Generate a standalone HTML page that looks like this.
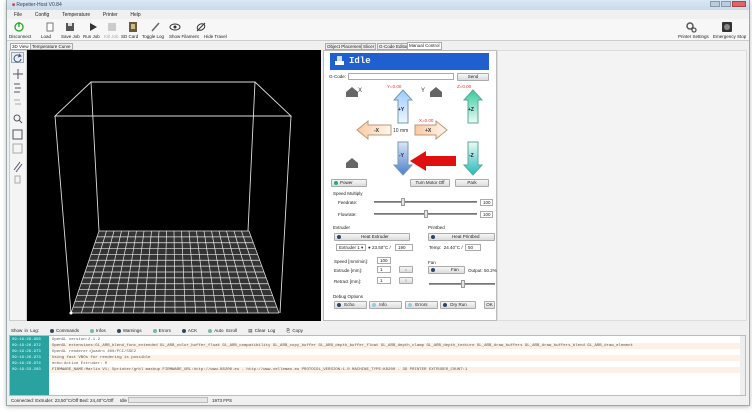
<!DOCTYPE html>
<html><head><meta charset="utf-8"><style>
*{margin:0;padding:0;box-sizing:border-box}
body{width:752px;height:413px;background:#fff;position:relative;overflow:hidden;font-family:"Liberation Sans",sans-serif;font-size:5px;color:#222}
.a{position:absolute}
.btn{position:absolute;background:linear-gradient(#f6f6f6,#dcdcdc);border:1px solid #aaa;border-radius:1px;font-size:4.5px;text-align:center;line-height:7px}
.lbl{position:absolute;font-size:4.5px;white-space:nowrap}
.tb{position:absolute;top:34px;font-size:4.5px;white-space:nowrap}
.inp{position:absolute;background:#fff;border:1px solid #aaa;font-size:4.5px;line-height:6px;padding-left:2px}
.sl{position:absolute;height:2px;background:#999;border-top:1px solid #777}
.knob{position:absolute;width:4px;height:8px;background:#e6e6e6;border:1px solid #999}
.led{display:inline-block;width:4px;height:4px;border-radius:50%;background:#346;margin:0 2px;vertical-align:middle}
.log div{height:6px;line-height:6px;font-family:"Liberation Mono",monospace;font-size:4px;white-space:nowrap;padding-left:2px}
</style></head><body>
<!-- window frame -->
<div class="a" style="left:6px;top:0;width:744px;height:406px;background:#f0f0f0;border:1px solid #9aa;box-shadow:0 1px 4px #bbb"></div>
<div class="a" style="left:7px;top:0;width:742px;height:10px;background:linear-gradient(#dbe7f3,#c9daea)"></div>
<div class="lbl" style="left:12px;top:2px;color:#345;font-size:5px"><span style="color:#c33">■</span> Repetier-Host V0.84</div>
<div class="a" style="left:710px;top:1px;width:10px;height:6px;background:#bcd;border:1px solid #89a"></div>
<div class="a" style="left:721px;top:1px;width:10px;height:6px;background:#bcd;border:1px solid #89a"></div>
<div class="a" style="left:732px;top:1px;width:14px;height:6px;background:#d66;border:1px solid #a44"></div>
<!-- menu -->
<div class="lbl" style="left:14px;top:12px;font-size:5px;word-spacing:5px">File &nbsp;Config &nbsp;Temperature &nbsp;Printer &nbsp;Help</div>
<!-- toolbar -->
<div class="a" style="left:7px;top:19px;width:742px;height:22px;background:#f7f7f7;border-bottom:1px solid #ccc"></div>
<svg class="a" style="left:14px;top:22px" width="220" height="11">
<circle cx="5" cy="5" r="4" fill="none" stroke="#2a2" stroke-width="1.3"/><line x1="5" y1="0" x2="5" y2="5" stroke="#2a2" stroke-width="1.3"/>
<rect x="33" y="1" width="6" height="8" fill="#fff" stroke="#777"/>
<rect x="52" y="1" width="8" height="8" fill="#555"/><rect x="54" y="1" width="4" height="3" fill="#ddd"/>
<path d="M76 1 L83 5 L76 9Z" fill="#333"/>
<rect x="94" y="1" width="8" height="8" fill="#ccc"/>
<rect x="115" y="0" width="8" height="10" fill="#6a5a3a"/><rect x="117" y="2" width="4" height="5" fill="#cb8"/>
<line x1="138" y1="9" x2="145" y2="1" stroke="#666" stroke-width="1.5"/>
<ellipse cx="161" cy="5" rx="5" ry="3" fill="none" stroke="#333"/><circle cx="161" cy="5" r="1.5" fill="#333"/>
<ellipse cx="187" cy="5" rx="4" ry="3" fill="none" stroke="#333" transform="rotate(-30 187 5)"/><line x1="183" y1="9" x2="191" y2="1" stroke="#333"/>
</svg>
<div class="tb" style="left:9px">Disconnect</div><div class="tb" style="left:41px">Load</div><div class="tb" style="left:61px">Save Job</div><div class="tb" style="left:83px">Run Job</div><div class="tb" style="left:104px;color:#aaa">Kill Job</div><div class="tb" style="left:121px">SD Card</div><div class="tb" style="left:142px">Toggle Log</div><div class="tb" style="left:169px">Show Filament</div><div class="tb" style="left:204px">Hide Travel</div>
<svg class="a" style="left:684px;top:22px" width="60" height="11"><circle cx="6" cy="4" r="3" fill="none" stroke="#555" stroke-width="1.5"/><circle cx="10" cy="8" r="2" fill="none" stroke="#555" stroke-width="1.3"/><rect x="38" y="0" width="10" height="10" rx="1" fill="#333"/><circle cx="43" cy="5" r="3" fill="#888"/></svg>
<div class="tb" style="left:678px">Printer Settings</div><div class="tb" style="left:713px">Emergency Stop</div>
<!-- left tabs -->
<div class="lbl" style="left:10px;top:43px;background:#fff;border:1px solid #aaa;padding:0 1px;height:7px">3D View</div>
<div class="lbl" style="left:30px;top:43px;border:1px solid #aaa;padding:0 1px;height:7px;background:#eee">Temperature Curve</div>
<!-- left tool strip -->
<div class="a" style="left:9px;top:50px;width:18px;height:271px;background:#f4f4f4;border:1px solid #ccc"></div>
<div class="a" style="left:11px;top:52px;width:13px;height:11px;border:1px solid #9ab;background:#e4eef8"></div>
<svg class="a" style="left:11px;top:52px" width="14" height="140" fill="none" stroke="#556" stroke-width="1">
<path d="M9 4 A3.5 3.5 0 1 0 10 7"/><path d="M8 2 L10 4 L7 5"/>
<path d="M7 17 V27 M2 22 H12"/>
<path d="M3 32 H9 M4 36 H10 M3 40 H9"/>
<path d="M3 48 H9 M4 52 H10" stroke="#aaa"/>
<circle cx="6" cy="66" r="3"/><path d="M8 68 L11 71"/>
<rect x="2" y="78" width="9" height="9"/>
<rect x="2" y="92" width="9" height="9" stroke="#aaa"/>
<path d="M3 118 L9 110 M5 120 L11 112"/>
<rect x="4" y="124" width="5" height="7" stroke="#aaa"/>
</svg>
<!-- 3D view -->
<svg class="a" style="left:27px;top:50px" width="294" height="271" viewBox="27 50 294 271">
<rect x="27" y="50" width="294" height="271" fill="#000"/>
<g stroke="#ddd" stroke-width="0.9" fill="none">
<path d="M91 82 H255 L291 116 H55 Z"/>
<path d="M55 116 L71 313 M291 116 L280 313 M91 82 L99 231 M255 82 L248 231"/>
</g>
<polygon points="99,231 249,231 279,313 71,313" fill="#333"/>
<g stroke="#e8e8e8" stroke-width="0.7" id="g"></g>
<circle cx="71" cy="313" r="1.5" fill="#fff"/>
</svg>
<!-- right tabs -->
<div class="lbl" style="left:325px;top:43px;border:1px solid #aaa;padding:0 1px;height:7px;background:#eee">Object Placement</div>
<div class="lbl" style="left:361px;top:43px;border:1px solid #aaa;padding:0 1px;height:7px;background:#eee">Slicer</div>
<div class="lbl" style="left:377px;top:43px;border:1px solid #aaa;padding:0 1px;height:7px;background:#eee">G-Code Editor</div>
<div class="lbl" style="left:407px;top:42px;border:1px solid #aaa;padding:0 1px;height:8px;background:#fff">Manual Control</div>
<div class="a" style="left:323px;top:50px;width:174px;height:271px;background:#fff;border:1px solid #bbb"></div>
<div class="a" style="left:497px;top:50px;width:250px;height:271px;background:#f3f3f3;border:1px solid #ddd"></div>
<!-- idle header -->
<div class="a" style="left:330px;top:53px;width:159px;height:17px;background:#1f5fd0"></div>
<svg class="a" style="left:334px;top:55px" width="12" height="12"><rect x="1" y="6" width="9" height="4" fill="#fff"/><rect x="3" y="1" width="5" height="5" fill="#cde"/></svg>
<div class="lbl" style="left:349px;top:56px;color:#fff;font:bold 9px 'Liberation Mono',monospace">Idle</div>
<div class="lbl" style="left:329px;top:74px">G-Code:</div>
<div class="inp" style="left:348px;top:73px;width:106px;height:7px"></div>
<div class="btn" style="left:457px;top:73px;width:32px;height:8px;line-height:6px">Send</div>
<!-- jog -->
<svg class="a" style="left:330px;top:83px" width="165" height="100">
<g fill="#666"><path d="M16 9 L22 4 L28 9 V14 H16Z"/><path d="M100 9 L106 4 L112 9 V14 H100Z"/><path d="M16 80 L22 75 L28 80 V85 H16Z"/></g>
<text x="28" y="9" font-size="6" fill="#333" font-family="Liberation Sans">X</text><text x="91" y="9" font-size="6" fill="#333" font-family="Liberation Sans">Y</text>
<text x="57" y="5" font-size="4.5" fill="#e33" font-family="Liberation Sans">Y=0.00</text>
<text x="127" y="5" font-size="4.5" fill="#e33" font-family="Liberation Sans">Z=0.00</text>
<text x="89" y="39" font-size="4.5" fill="#e33" font-family="Liberation Sans">X=0.00</text>
<defs><linearGradient id="b" x1="0" x2="0" y1="0" y2="1"><stop offset="0" stop-color="#8ec"/><stop offset="0" stop-color="#9cf"/><stop offset="1" stop-color="#eef6ff"/></linearGradient>
<linearGradient id="t" x1="0" x2="0" y1="0" y2="1"><stop offset="0" stop-color="#3c9"/><stop offset="1" stop-color="#eefaf5"/></linearGradient>
<linearGradient id="o" x1="0" x2="1"><stop offset="0" stop-color="#f9c9a0"/><stop offset="1" stop-color="#fff6ee"/></linearGradient>
<linearGradient id="bd" x1="0" x2="0" y1="0" y2="1"><stop offset="0" stop-color="#dde6f6"/><stop offset="1" stop-color="#4a7fd0"/></linearGradient>
<linearGradient id="td" x1="0" x2="0" y1="0" y2="1"><stop offset="0" stop-color="#eefaf5"/><stop offset="1" stop-color="#2bb"/></linearGradient></defs>
<path d="M64 17 L73 7 L82 17 H78 V40 H68 V17Z" fill="url(#b)" stroke="#79a"/><text x="68" y="28" font-size="5" font-weight="bold" fill="#224" font-family="Liberation Sans">+Y</text>
<path d="M134 17 L143 7 L152 17 H148 V40 H138 V17Z" fill="url(#t)" stroke="#5a9"/><text x="138" y="28" font-size="5" font-weight="bold" fill="#224" font-family="Liberation Sans">+Z</text>
<path d="M27 47 L38 38 V42 H61 V52 H38 V56Z" fill="url(#o)" stroke="#b97"/><text x="44" y="49" font-size="5" font-weight="bold" fill="#333" font-family="Liberation Sans">-X</text>
<path d="M117 47 L106 38 V42 H85 V52 H106 V56Z" fill="url(#o)" stroke="#b97"/><text x="95" y="49" font-size="5" font-weight="bold" fill="#333" font-family="Liberation Sans">+X</text>
<text x="63" y="49" font-size="5" fill="#333" font-family="Liberation Sans">10 mm</text>
<path d="M68 59 H78 V82 H82 L73 92 L64 82 H68Z" fill="url(#bd)" stroke="#79a"/><text x="69" y="74" font-size="5" font-weight="bold" fill="#224" font-family="Liberation Sans">-Y</text>
<path d="M138 59 H148 V82 H152 L143 92 L134 82 H138Z" fill="url(#td)" stroke="#5a9"/><text x="139" y="74" font-size="5" font-weight="bold" fill="#224" font-family="Liberation Sans">-Z</text>
<path d="M80 78 L96 68 V73 H126 V83 H96 V88Z" fill="#e01010"/>
</svg>
<div class="btn" style="left:331px;top:179px;width:36px;height:8px;line-height:6px;text-align:left"><span class="led" style="background:#2a8"></span>Power</div>
<div class="btn" style="left:410px;top:179px;width:40px;height:8px;line-height:6px">Turn Motor Off</div>
<div class="btn" style="left:455px;top:179px;width:34px;height:8px;line-height:6px">Park</div>
<!-- speed -->
<div class="lbl" style="left:333px;top:191px">Speed Multiply</div>
<div class="lbl" style="left:338px;top:200px">Feedrate:</div>
<div class="sl" style="left:374px;top:201px;width:103px"></div><div class="knob" style="left:401px;top:198px"></div>
<div class="inp" style="left:480px;top:199px;width:13px;height:7px">100</div>
<div class="lbl" style="left:338px;top:212px">Flowrate:</div>
<div class="sl" style="left:374px;top:213px;width:103px"></div><div class="knob" style="left:424px;top:210px"></div>
<div class="inp" style="left:480px;top:211px;width:13px;height:7px">100</div>
<!-- extruder -->
<div class="lbl" style="left:333px;top:225px">Extruder</div>
<div class="btn" style="left:334px;top:233px;width:76px;height:8px;line-height:6px;text-align:left"><span class="led"></span><span style="margin-left:18px">Heat Extruder</span></div>
<div class="inp" style="left:336px;top:244px;width:30px;height:7px">Extruder 1 ▾</div>
<div class="lbl" style="left:368px;top:245px">● 23.50°C /</div>
<div class="inp" style="left:395px;top:244px;width:18px;height:7px">190</div>
<div class="lbl" style="left:428px;top:225px">Printbed</div>
<div class="btn" style="left:428px;top:233px;width:67px;height:8px;line-height:6px;text-align:left"><span class="led"></span><span style="margin-left:15px">Heat Printbed</span></div>
<div class="lbl" style="left:429px;top:245px">Temp: &nbsp;24.40°C /</div>
<div class="inp" style="left:465px;top:244px;width:16px;height:7px">50</div>
<div class="lbl" style="left:334px;top:259px">Speed [mm/min]:</div><div class="inp" style="left:377px;top:257px;width:14px;height:7px">100</div>
<div class="lbl" style="left:334px;top:268px">Extrude [mm]:</div><div class="inp" style="left:377px;top:266px;width:14px;height:7px">1</div><div class="btn" style="left:399px;top:266px;width:14px;height:7px;line-height:5px">↓</div>
<div class="lbl" style="left:334px;top:279px">Retract [mm]:</div><div class="inp" style="left:377px;top:277px;width:14px;height:7px">1</div><div class="btn" style="left:399px;top:277px;width:14px;height:7px;line-height:5px">↑</div>
<div class="lbl" style="left:428px;top:260px">Fan</div>
<div class="btn" style="left:428px;top:266px;width:37px;height:8px;line-height:6px;text-align:left"><span class="led"></span><span style="margin-left:14px">Fan</span></div>
<div class="lbl" style="left:468px;top:268px">Output: 50.2%</div>
<div class="sl" style="left:429px;top:283px;width:66px"></div><div class="knob" style="left:461px;top:280px"></div>
<!-- debug -->
<div class="lbl" style="left:333px;top:294px">Debug Options</div>
<div class="btn" style="left:334px;top:301px;width:33px;height:8px;line-height:6px;text-align:left"><span class="led"></span> Echo</div>
<div class="btn" style="left:369px;top:301px;width:33px;height:8px;line-height:6px;text-align:left"><span class="led" style="background:#9cd"></span> Info</div>
<div class="btn" style="left:405px;top:301px;width:33px;height:8px;line-height:6px;text-align:left"><span class="led" style="background:#9cd"></span> Errors</div>
<div class="btn" style="left:440px;top:301px;width:36px;height:8px;line-height:6px;text-align:left"><span class="led"></span> Dry Run</div>
<div class="btn" style="left:484px;top:301px;width:11px;height:8px;line-height:6px">OK</div>
<!-- log toolbar -->
<div class="lbl" style="left:11px;top:328px;word-spacing:1px">Show in Log: &nbsp;&nbsp; <span class="led"></span>Commands &nbsp;&nbsp; <span class="led" style="background:#7b9"></span>Infos &nbsp;&nbsp; <span class="led"></span>Warnings &nbsp;&nbsp; <span class="led" style="background:#7b9"></span>Errors &nbsp;&nbsp; <span class="led"></span>ACK &nbsp;&nbsp; <span class="led" style="background:#7b9"></span>Auto Scroll &nbsp;&nbsp;&nbsp; ▤ Clear Log &nbsp;&nbsp;&nbsp; ⎘ Copy</div>
<div class="a" style="left:9px;top:335px;width:737px;height:61px;background:#fff;border:1px solid #bbb"></div>
<div class="a log" style="left:10px;top:336px;width:39px;height:59px;background:#2aa3a0;color:#dff;padding-top:1px">
<div>09:19:26.958</div><div>09:19:26.972</div><div>09:19:26.973</div><div>09:19:26.973</div><div>09:19:26.974</div><div>09:19:33.203</div></div>
<div class="a log" style="left:50px;top:337px;width:690px;color:#555">
<div>OpenGL version:2.1.2</div>
<div style="background:#fdf0e4">OpenGL extensions:GL_ARB_blend_func_extended GL_ARB_color_buffer_float GL_ARB_compatibility GL_ARB_copy_buffer GL_ARB_depth_buffer_float GL_ARB_depth_clamp GL_ARB_depth_texture GL_ARB_draw_buffers GL_ARB_draw_buffers_blend GL_ARB_draw_element</div>
<div>OpenGL renderer:Quadro 400/PCI/SSE2</div>
<div style="background:#fdf0e4">Using fast VBOs for rendering is possible</div>
<div>echo:Active Extruder: 0</div>
<div style="background:#fdf0e4">FIRMWARE_NAME:Marlin V1; Sprinter/grbl mashup FIRMWARE_URL:http://www.K8200.eu - http://www.velleman.eu PROTOCOL_VERSION:1.0 MACHINE_TYPE:K8200 - 3D PRINTER EXTRUDER_COUNT:1</div>
</div>
<div class="a" style="left:740px;top:336px;width:5px;height:59px;background:#eee"></div>
<!-- status -->
<div class="lbl" style="left:11px;top:398px">Connected: Extruder: 23,50°C/Off Bed: 24,40°C/Off &nbsp;&nbsp;&nbsp; Idle</div>
<div class="a" style="left:128px;top:397px;width:80px;height:6px;background:#e6e6e6;border:1px solid #bbb"></div>
<div class="lbl" style="left:212px;top:398px">1973 FPS</div>
<script>
var g=document.getElementById('g'),s='';
var bl=[99,231],br=[249,231],fl=[71,313],fr=[279,313],N=20,M=14;
for(var i=0;i<=N;i++){var t=i/N;s+='<line x1="'+(bl[0]+(br[0]-bl[0])*t)+'" y1="231" x2="'+(fl[0]+(fr[0]-fl[0])*t)+'" y2="313"/>';}
for(var j=0;j<=M;j++){var u=j/M,y=231+82*u,xl=99+(71-99)*u,xr=249+(279-249)*u;s+='<line x1="'+xl+'" y1="'+y+'" x2="'+xr+'" y2="'+y+'"/>';}
g.innerHTML=s;
</script>
</body></html>
